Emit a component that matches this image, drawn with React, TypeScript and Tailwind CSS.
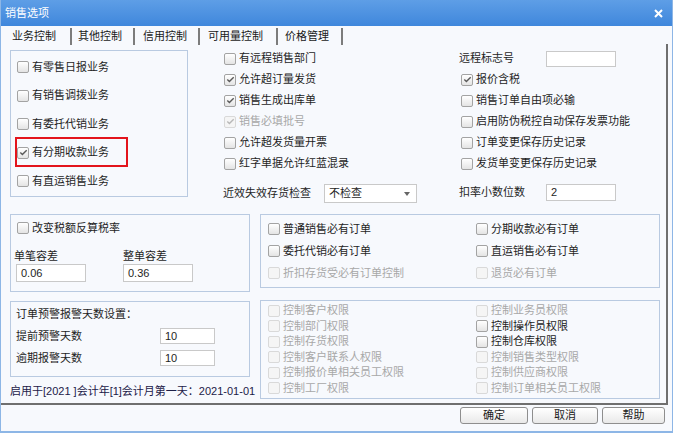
import type { ReactNode } from "react";

function Check({ checked, disabled }: { checked?: boolean; disabled?: boolean }) {
  return (
    <span
      className={`flex h-[12px] w-[12px] shrink-0 items-center justify-center rounded-[2px] border ${
        disabled
          ? "border-[#d9d9d9] bg-[#f5f5f5]"
          : "border-[#a3a3a3] bg-linear-to-b from-white to-[#e4e4e4]"
      }`}
    >
      {checked && (
        <svg width="9" height="9" viewBox="0 0 9 9">
          <path
            d="M1.3 4.6 L3.4 6.6 L7.7 2.2"
            fill="none"
            stroke={disabled ? "#b8b8b8" : "#5a5a5a"}
            strokeWidth="1.4"
          />
        </svg>
      )}
    </span>
  );
}

function Row({
  label,
  checked,
  disabled,
  className = "",
}: {
  label: string;
  checked?: boolean;
  disabled?: boolean;
  className?: string;
}) {
  return (
    <div className={`flex items-center gap-[3px] ${className}`}>
      <Check checked={checked} disabled={disabled} />
      <span className={disabled ? "text-[#a8a8a8]" : "text-[#1e1e1e]"}>{label}</span>
    </div>
  );
}

function Box({ className = "", children }: { className?: string; children: ReactNode }) {
  return <div className={`border border-[#b9cae1] ${className}`}>{children}</div>;
}

function Input({ value = "", className = "" }: { value?: string; className?: string }) {
  return (
    <div className={`flex items-center border border-[#c9c9c9] bg-white pl-[4px] text-[#1e1e1e] ${className}`}>
      {value}
    </div>
  );
}

const tabs = [
  { name: "业务控制", w: "w-[69px] pl-[11px]" },
  { name: "其他控制", w: "w-[61px] pl-[6px]" },
  { name: "信用控制", w: "w-[63px] pl-[8px]" },
  { name: "可用量控制", w: "w-[76px] pl-[8px]" },
  { name: "价格管理", w: "w-[63px] pl-[7px]" },
];

const permissions = [
  ["控制客户权限", true, "控制业务员权限", true],
  ["控制部门权限", true, "控制操作员权限", false],
  ["控制存货权限", true, "控制仓库权限", false],
  ["控制客户联系人权限", true, "控制销售类型权限", true],
  ["控制报价单相关员工权限", true, "控制供应商权限", true],
  ["控制工厂权限", true, "控制订单相关员工权限", true],
] as const;

export default function App() {
  return (
    <div className="flex h-[433px] w-[673px] flex-col border-x border-b-2 border-[#8db6e6] bg-[#f7f9fd] font-['Liberation_Sans','Noto_Sans_CJK_SC',sans-serif] text-[11px] leading-none">
      {/* title bar */}
      <div className="flex h-[26px] shrink-0 items-center justify-between bg-linear-to-b from-[#5e9ee6] to-[#3f87dc] pl-[4px] pr-[9px] text-white">
        <span>销售选项</span>
        <svg width="9" height="9" viewBox="0 0 9 9">
          <path d="M1 1 L8 8 M8 1 L1 8" stroke="white" strokeWidth="2" />
        </svg>
      </div>

      {/* tabs */}
      <div className="flex h-[18px] shrink-0 items-end">
        {tabs.map((t) => (
          <div key={t.name} className="flex items-end">
            <div className={`flex h-[16px] items-center text-[#1a1a1a] ${t.w}`}>{t.name}</div>
            <div className="mb-[-1px] h-[17px] w-[2px] bg-[#7c7c7c]" />
          </div>
        ))}
      </div>

      {/* tab page */}
      <div className="flex h-[361px] w-[667px] shrink-0 flex-col border-r-2 border-b-2 border-[#6f6f6f]">
        {/* upper section */}
        <div className="flex h-[170px] shrink-0">
          <Box className="ml-[9px] mt-[6px] h-[147px] w-[178px] pl-[6px] pt-[2px]">
            <Row label="有零售日报业务" className="h-[28.5px]" />
            <Row label="有销售调拨业务" className="h-[28.5px]" />
            <Row label="有委托代销业务" className="h-[28.5px]" />
            <div className="relative">
              <Row label="有分期收款业务" checked className="h-[28.5px]" />
              <span className="absolute left-[-2px] top-[-2px] h-[30px] w-[113px] border-2 border-[#e3141c]" />
            </div>
            <Row label="有直运销售业务" className="h-[28.5px]" />
          </Box>

          <div className="ml-[35px] mt-[4px] flex w-[236px] flex-col">
            <div className="pl-[1px]">
              <Row label="有远程销售部门" className="h-[21px]" />
              <Row label="允许超订量发货" checked className="h-[21px]" />
              <Row label="销售生成出库单" checked className="h-[21px]" />
              <Row label="销售必填批号" checked disabled className="h-[21px]" />
              <Row label="允许超发货量开票" className="h-[21px]" />
              <Row label="红字单据允许红蓝混录" className="h-[21px]" />
            </div>
            <div className="mt-[10px] flex h-[19px] items-center">
              <span className="w-[101px] text-[#1e1e1e]">近效失效存货检查</span>
              <div className="flex h-[19px] w-[93px] items-center justify-between border border-[#c9c9c9] bg-white pl-[4px] pr-[6px] text-[#1e1e1e]">
                <span>不检查</span>
                <svg width="6" height="4" viewBox="0 0 6 4">
                  <path d="M0 0 H6 L3 4 Z" fill="#666" />
                </svg>
              </div>
            </div>
          </div>

          <div className="mt-[4px] flex flex-col">
            <div className="flex h-[21px] items-center">
              <span className="w-[87px] text-[#1e1e1e]">远程标志号</span>
              <Input className="h-[16px] w-[70px]" />
            </div>
            <div className="pl-[2px]">
              <Row label="报价含税" checked className="h-[21px]" />
              <Row label="销售订单自由项必输" className="h-[21px]" />
              <Row label="启用防伪税控自动保存发票功能" className="h-[21px]" />
              <Row label="订单变更保存历史记录" className="h-[21px]" />
              <Row label="发货单变更保存历史记录" className="h-[21px]" />
            </div>
            <div className="mt-[10px] flex h-[17px] items-center">
              <span className="w-[87px] text-[#1e1e1e]">扣率小数位数</span>
              <Input value="2" className="h-[17px] w-[70px]" />
            </div>
          </div>
        </div>

        {/* lower section */}
        <div className="flex">
          <div className="ml-[9px] flex w-[240px] flex-col">
            <Box className="h-[78px] pl-[3px] pt-[3px]">
              <Row label="改变税额反算税率" className="h-[20px] pl-[3px]" />
              <div className="mt-[11px] flex">
                <div className="w-[109px]">
                  <div className="h-[14px] leading-[14px] text-[#1e1e1e]">单笔容差</div>
                  <Input value="0.06" className="mt-[1px] ml-[2px] h-[18px] w-[70px]" />
                </div>
                <div>
                  <div className="h-[14px] leading-[14px] text-[#1e1e1e]">整单容差</div>
                  <Input value="0.36" className="mt-[1px] h-[18px] w-[70px]" />
                </div>
              </div>
            </Box>
            <Box className="mt-[9px] h-[76px] pl-[5px] pt-[5px]">
              <div className="h-[14px] leading-[14px] text-[#1e1e1e]">订单预警报警天数设置：</div>
              <div className="mt-[7px] flex h-[16px] items-center">
                <span className="w-[144px] text-[#1e1e1e]">提前预警天数</span>
                <Input value="10" className="h-[16px] w-[55px]" />
              </div>
              <div className="mt-[6px] flex h-[16px] items-center">
                <span className="w-[144px] text-[#1e1e1e]">逾期报警天数</span>
                <Input value="10" className="h-[16px] w-[55px]" />
              </div>
            </Box>
            <div className="mt-[7px] h-[14px] whitespace-nowrap leading-[14px] text-[#1c2048]">
              启用于[2021 ]会计年[1]会计月第一天：2021-01-01
            </div>
          </div>

          <div className="ml-[10px] flex w-[400px] flex-col">
            <Box className="h-[74px] pl-[7px] pt-[3px]">
              <div className="grid grid-cols-[208px_1fr]">
                <Row label="普通销售必有订单" className="h-[22px]" />
                <Row label="分期收款必有订单" className="h-[22px]" />
                <Row label="委托代销必有订单" className="h-[22px]" />
                <Row label="直运销售必有订单" className="h-[22px]" />
                <Row label="折扣存货受必有订单控制" disabled className="h-[22px]" />
                <Row label="退货必有订单" disabled className="h-[22px]" />
              </div>
            </Box>
            <Box className="mt-[12px] h-[99px] pl-[7px] pt-[2px]">
              <div className="grid grid-cols-[208px_1fr]">
                {permissions.map(([a, ad, b, bd]) => (
                  <div key={a} className="contents">
                    <Row label={a} disabled={ad} className="h-[15.5px]" />
                    <Row label={b} disabled={bd} className="h-[15.5px]" />
                  </div>
                ))}
              </div>
            </Box>
          </div>
        </div>
      </div>

      {/* buttons */}
      <div className="mt-[2px] flex justify-end gap-[4px] pr-[7px]">
        {[
          { t: "确定", w: "w-[68px]" },
          { t: "取消", w: "w-[66px]" },
          { t: "帮助", w: "w-[63px]" },
        ].map((b) => (
          <button
            key={b.t}
            className={`flex h-[17px] items-center justify-center rounded-[3px] border border-[#8e8e8e] bg-linear-to-b from-white to-[#e9e9e9] text-[#1a1a1a] ${b.w}`}
          >
            {b.t}
          </button>
        ))}
      </div>
    </div>
  );
}
